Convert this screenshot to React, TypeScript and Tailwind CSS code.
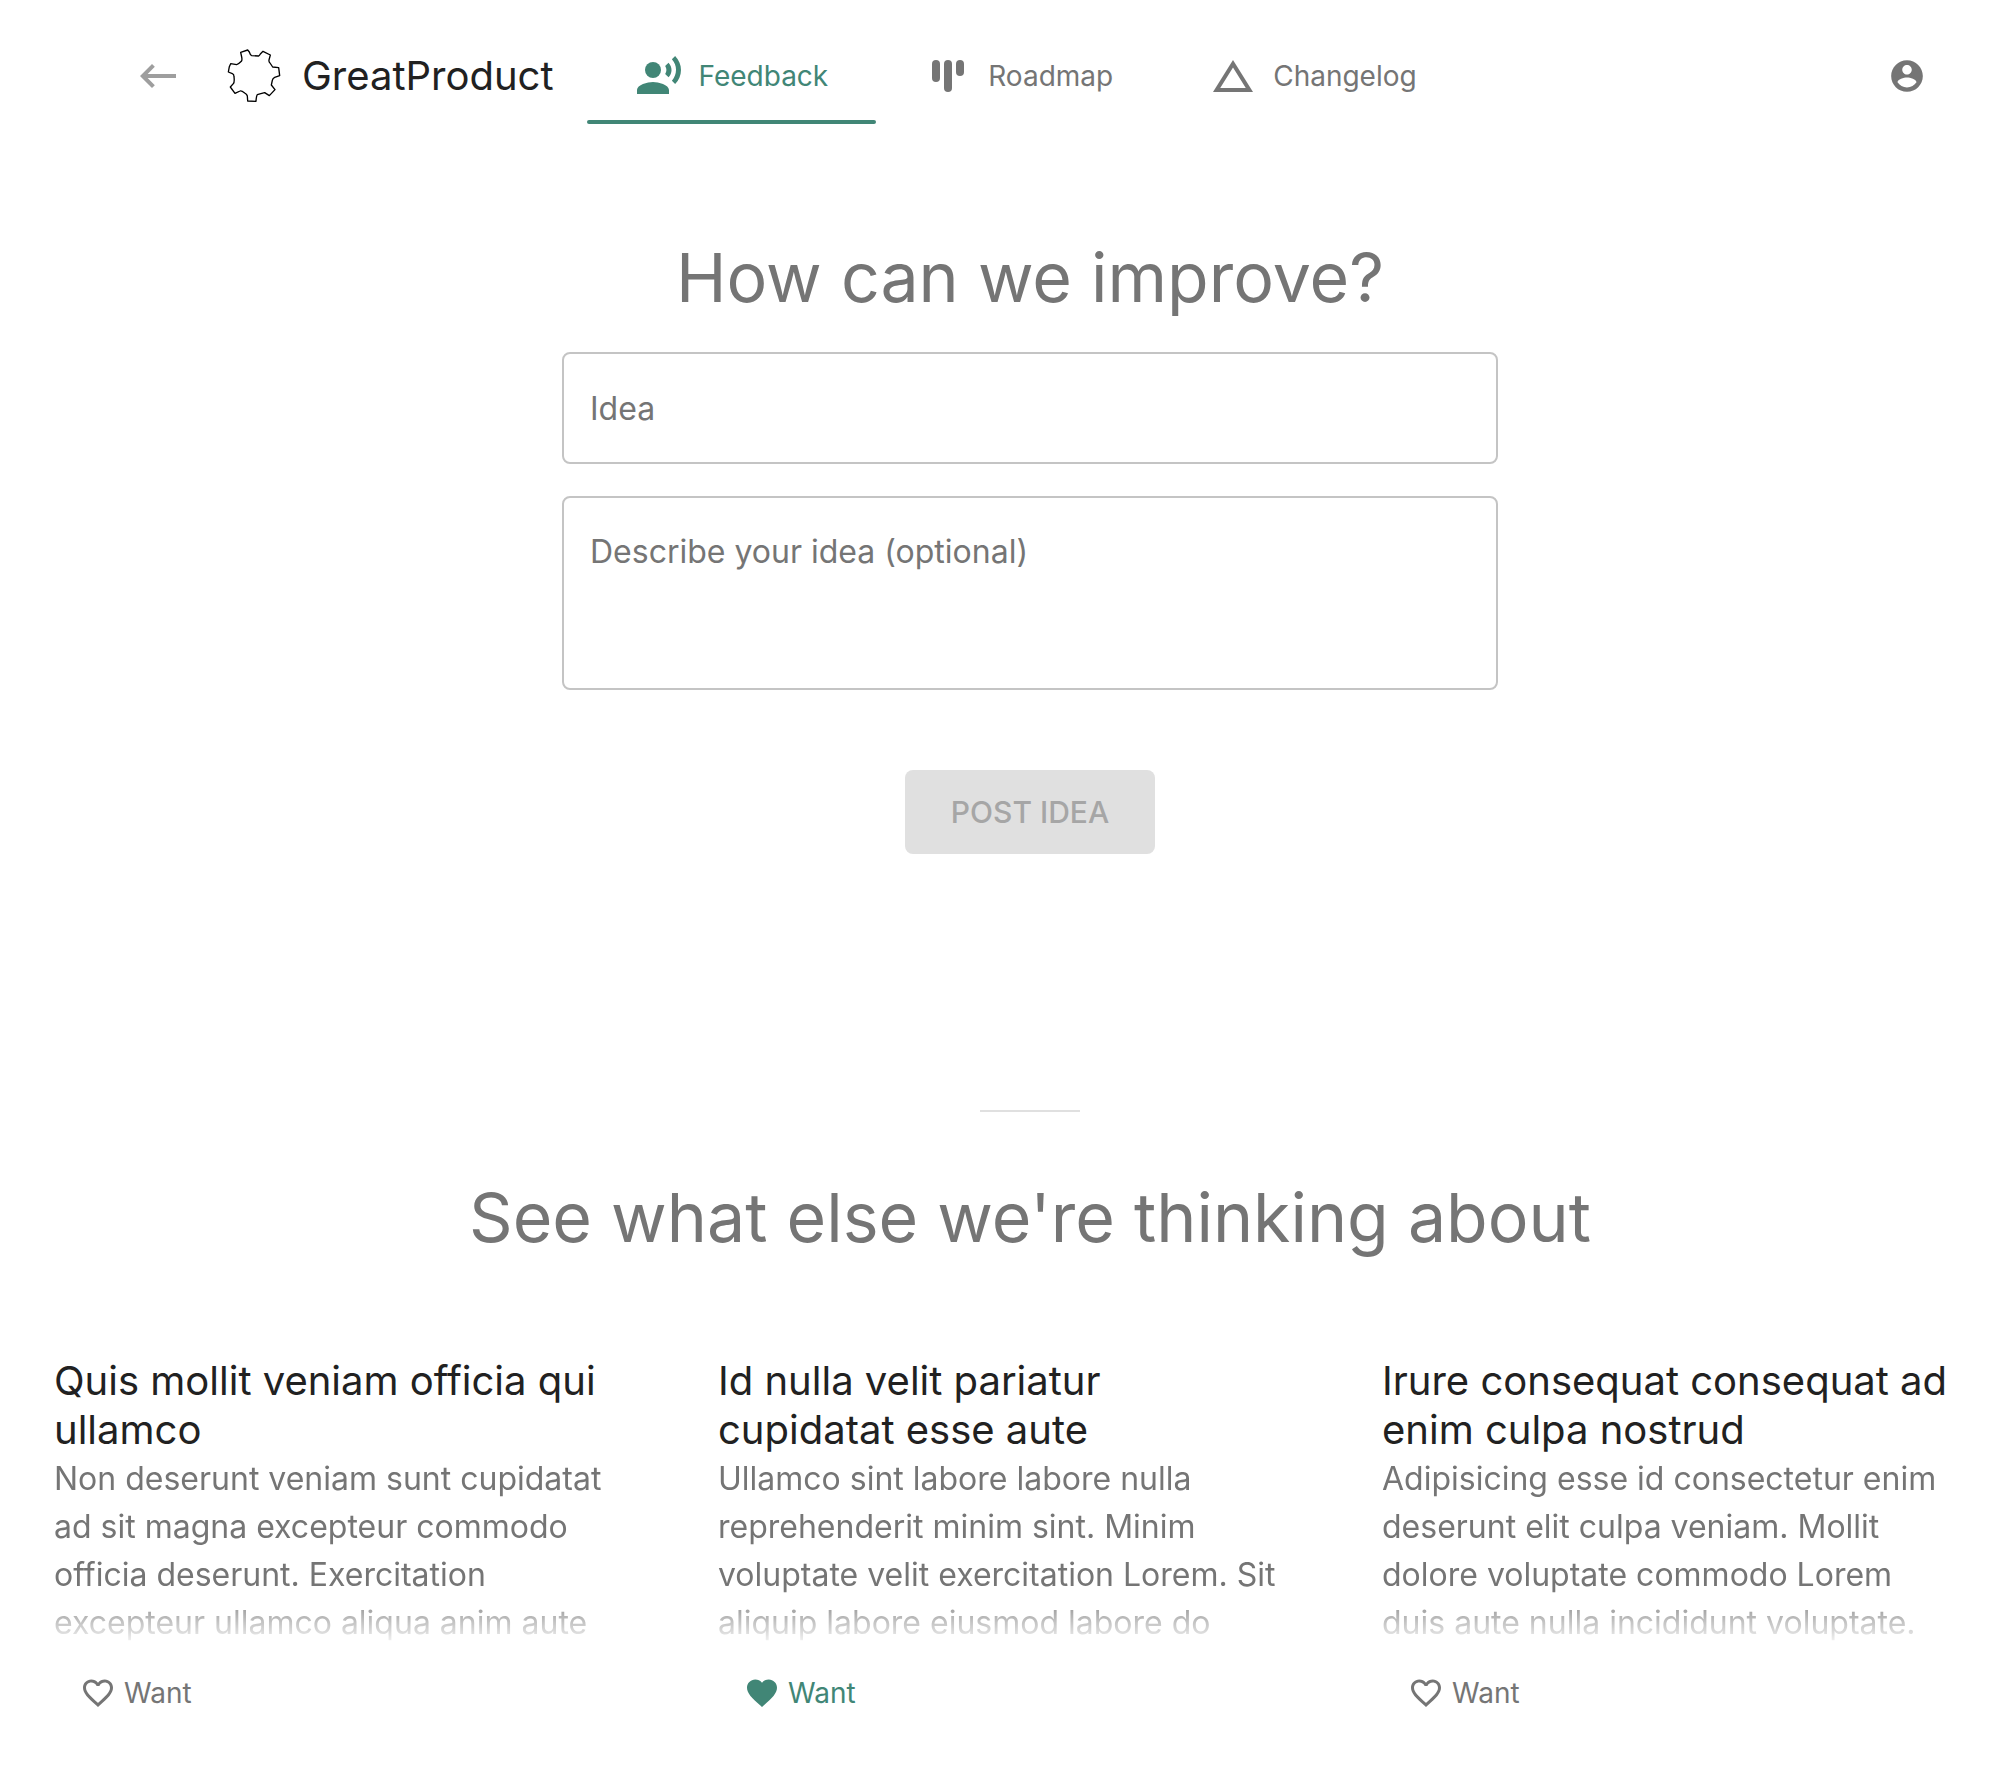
import { ComponentType, ReactNode } from "react";

type IconProps = { className?: string };

function Icon({ d, className }: { d: string; className?: string }) {
  return (
    <svg viewBox="0 0 24 24" fill="currentColor" aria-hidden="true" className={className}>
      <path d={d} />
    </svg>
  );
}

const BackIcon = ({ className }: IconProps) => (
  <Icon className={className} d="M21 11H6.83l3.58-3.59L9 6l-6 6 6 6 1.41-1.41L6.83 13H21z" />
);

const VoiceIcon = ({ className }: IconProps) => (
  <svg viewBox="0 0 24 24" fill="currentColor" aria-hidden="true" className={className}>
    <circle cx="9" cy="9" r="4" />
    <path d="M9 15c-2.67 0-8 1.34-8 4v2h16v-2c0-2.66-5.33-4-8-4zm7.76-9.64l-1.68 1.69c.84 1.18.84 2.71 0 3.89l1.68 1.69c2.02-2.02 2.02-5.07 0-7.27zM20.07 2l-1.63 1.63c2.77 3.02 2.77 7.56 0 10.74L20.07 16c3.9-3.89 3.91-9.95 0-14z" />
  </svg>
);

const RoadmapIcon = ({ className }: IconProps) => (
  <svg viewBox="0 0 24 24" fill="currentColor" aria-hidden="true" className={className}>
    <rect x="4" y="4" width="4" height="11" rx="2" />
    <rect x="10" y="4" width="4" height="16" rx="2" />
    <rect x="16" y="4" width="4" height="8" rx="2" />
  </svg>
);

const ChangelogIcon = ({ className }: IconProps) => (
  <Icon className={className} d="M12 7.77L18.39 18H5.61L12 7.77M12 4L2 20h20L12 4z" />
);

const AccountIcon = ({ className }: IconProps) => (
  <Icon
    className={className}
    d="M12 2C6.48 2 2 6.48 2 12s4.48 10 10 10 10-4.48 10-10S17.52 2 12 2zm0 3c1.66 0 3 1.34 3 3s-1.34 3-3 3-3-1.34-3-3 1.34-3 3-3zm0 14.2c-2.5 0-4.71-1.28-6-3.22.03-1.99 4-3.08 6-3.08 1.99 0 5.97 1.09 6 3.08-1.29 1.94-3.5 3.22-6 3.22z"
  />
);

const HeartIcon = ({ className }: IconProps) => (
  <Icon
    className={className}
    d="M12 21.35l-1.45-1.32C5.4 15.36 2 12.28 2 8.5 2 5.42 4.42 3 7.5 3c1.74 0 3.41.81 4.5 2.09C13.09 3.81 14.76 3 16.5 3 19.58 3 22 5.42 22 8.5c0 3.78-3.4 6.86-8.55 11.54L12 21.35z"
  />
);

const HeartOutlineIcon = ({ className }: IconProps) => (
  <Icon
    className={className}
    d="M16.5 3c-1.74 0-3.41.81-4.5 2.09C10.91 3.81 9.24 3 7.5 3 4.42 3 2 5.42 2 8.5c0 3.78 3.4 6.86 8.55 11.54L12 21.35l1.45-1.32C18.6 15.36 22 12.28 22 8.5 22 5.42 19.58 3 16.5 3zm-4.4 15.55l-.1.1-.1-.1C7.14 14.24 4 11.39 4 8.5 4 6.5 5.5 5 7.5 5c1.54 0 3.04.99 3.57 2.36h1.87C13.46 5.99 14.96 5 16.5 5c2 0 3.5 1.5 3.5 3.5 0 2.89-3.14 5.74-7.9 10.05z"
  />
);

const GearLogo = ({ className }: IconProps) => (
  <svg viewBox="36 27 162 162" fill="none" stroke="#000000" strokeWidth="4" strokeLinejoin="round" aria-hidden="true" className={className}>
    <path d="M77 37L98 30L103 36Q106 46 110 47L131 48Q134 46 136 42L144 34L166 45L162 60Q161 66 165 69L173 81L191 83L194 107L179 112Q173 115 172 121L169 135L180 149L163 167L149 158Q137 161 127 164Q124 168 123 184L98 183L97 168Q96 163 89 159Q79 151 75 153L60 160L46 141L55 131Q59 127 57 110Q57 103 52 101L40 96L43 80L47 71L65 74Q70 73 79 64Q82 60 80 51Z" />
  </svg>
);

const tabs: { label: string; icon: ComponentType<IconProps>; active?: boolean }[] = [
  { label: "Feedback", icon: VoiceIcon, active: true },
  { label: "Roadmap", icon: RoadmapIcon },
  { label: "Changelog", icon: ChangelogIcon },
];

const ideas = [
  {
    title: "Quis mollit veniam officia qui ullamco",
    body: "Non deserunt veniam sunt cupidatat ad sit magna excepteur commodo officia deserunt. Exercitation excepteur ullamco aliqua anim aute",
    wanted: false,
  },
  {
    title: "Id nulla velit pariatur cupidatat esse aute",
    body: "Ullamco sint labore labore nulla reprehenderit minim sint. Minim voluptate velit exercitation Lorem. Sit aliquip labore eiusmod labore do",
    wanted: true,
  },
  {
    title: "Irure consequat consequat ad enim culpa nostrud",
    body: "Adipisicing esse id consectetur enim deserunt elit culpa veniam. Mollit dolore voluptate commodo Lorem duis aute nulla incididunt voluptate.",
    wanted: false,
  },
];

function Heading({ children }: { children: ReactNode }) {
  return <h2 className="text-center text-[68px] leading-[82px] text-[#757575]">{children}</h2>;
}

export default function App() {
  return (
    <div className="min-h-screen overflow-hidden bg-white font-['Inter',sans-serif] text-[#212121]">
      <header className="flex items-center pt-7 pr-[76px] pl-[134px]">
        <a href="#back" aria-label="Back" className="text-[#9e9e9e]">
          <BackIcon className="size-12" />
        </a>
        <a href="#home" className="ml-[45px] flex items-center gap-[21px] text-[40px] leading-12">
          <GearLogo className="size-[54px]" />
          GreatProduct
        </a>
        <nav className="ml-[33px] flex">
          {tabs.map(({ label, icon: TabIcon, active }) => (
            <a
              key={label}
              href={`#${label.toLowerCase()}`}
              className={`relative flex items-center gap-4 px-12 py-6 text-[28px] leading-12 ${active ? "text-[#418676]" : "text-[#757575]"}`}
            >
              <TabIcon className="size-12" />
              {label}
              {active && <span className="absolute inset-x-0 bottom-0 h-1 rounded-sm bg-[#418676]" />}
            </a>
          ))}
        </nav>
        <button type="button" aria-label="Account" className="ml-auto text-[#757575]">
          <AccountIcon className="size-[38px]" />
        </button>
      </header>

      <main className="pt-28">
        <div className="pl-[58px]">
          <Heading>How can we improve?</Heading>
          <form className="mx-auto mt-[34px] flex max-w-[936px] flex-col items-center gap-8">
            <input
              type="text"
              aria-label="Idea"
              placeholder="Idea"
              className="h-28 w-full rounded-lg border-2 border-[#c4c4c4] px-[26px] text-[32px] placeholder:text-[#757575]"
            />
            <textarea
              aria-label="Describe your idea (optional)"
              placeholder="Describe your idea (optional)"
              rows={3}
              className="h-[194px] w-full resize-none rounded-lg border-2 border-[#c4c4c4] px-[26px] pt-[30px] text-[32px] leading-12 placeholder:text-[#757575]"
            />
            <button
              type="submit"
              disabled
              className="mt-12 h-[84px] w-[250px] rounded-lg bg-[#e0e0e0] text-[30px] font-medium text-[#a6a6a6] uppercase"
            >
              Post idea
            </button>
          </form>
          <hr className="mx-auto mt-64 w-25 border-t-2 border-[#e0e0e0]" />
          <div className="mt-16">
            <Heading>See what else we're thinking about</Heading>
          </div>
        </div>

        <section className="mt-[98px] grid grid-cols-3 gap-24 pr-[52px] pl-[54px]">
          {ideas.map(({ title, body, wanted }) => (
            <article key={title}>
              <h3 className="text-[40px] leading-[49px]">{title}</h3>
              <p className="mt-px h-48 overflow-hidden mask-linear-180 mask-linear-from-70% mask-linear-to-100% text-[32px] leading-12 text-[#757575]">
                {body}
              </p>
              <button
                type="button"
                aria-pressed={wanted}
                className={`mt-[22px] ml-[26px] flex items-center gap-2 text-[28px] leading-12 ${wanted ? "text-[#418676]" : "text-[#757575]"}`}
              >
                {wanted ? <HeartIcon className="size-9" /> : <HeartOutlineIcon className="size-9" />}
                Want
              </button>
            </article>
          ))}
        </section>
      </main>
    </div>
  );
}
